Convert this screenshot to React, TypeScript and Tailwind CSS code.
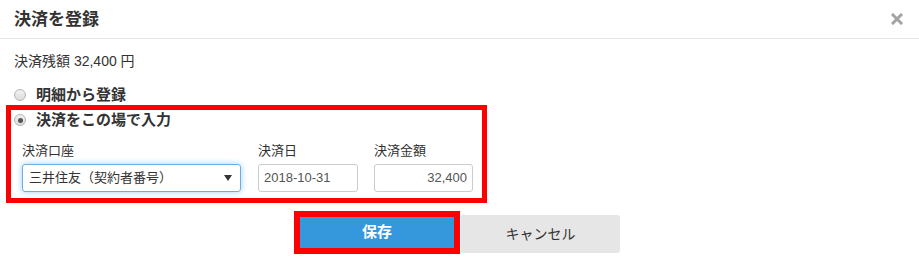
import React, { useState } from 'react';

const font = { fontFamily: '"Liberation Sans", "Noto Sans CJK JP", sans-serif' };

const Radio = ({ checked }: { checked?: boolean }) => (
  <span className="flex h-[12px] w-[12px] items-center justify-center rounded-full border border-[#b4b4b4] bg-gradient-to-b from-[#f2f2f2] to-[#dcdcdc]">
    {checked && <span className="h-[5px] w-[5px] rounded-full bg-[#555]" />}
  </span>
);

const App = () => {
  const [mode] = useState<'detail' | 'direct'>('direct');

  return (
    <div className="h-[267px] w-[919px] bg-white text-[#333]" style={font}>
      {/* Header */}
      <div className="flex h-[39px] items-center justify-between border-b border-[#e5e5e5] pl-[14px] pr-[16px]">
        <h4 className="text-[17px] font-bold leading-none">決済を登録</h4>
        <svg width="12" height="12" viewBox="0 0 12 12" className="text-[#a3a3a3]">
          <path d="M2 2 L10 10 M10 2 L2 10" stroke="currentColor" strokeWidth="3" strokeLinecap="square" />
        </svg>
      </div>

      <div className="px-[6px]">
        <p className="mt-[14px] pl-[8px] text-[14px] leading-[16px]">決済残額 32,400 円</p>

        <label className="mt-[16px] flex h-[20px] items-center gap-[10px] pl-[8px]">
          <Radio checked={mode === 'detail'} />
          <span className="text-[15px] font-bold">明細から登録</span>
        </label>

        {/* Direct entry */}
        <div className="w-[481px] border-[5px] border-[#ff0000] pb-[6px]">
          <label className="flex h-[20px] items-center gap-[10px] pl-[3px]">
            <Radio checked={mode === 'direct'} />
            <span className="text-[15px] font-bold">決済をこの場で入力</span>
          </label>

          <div className="mt-[12px] flex pl-[11px]">
            <div className="w-[219px]">
              <div className="text-[13px] leading-[18px]">決済口座</div>
              <div className="mt-[4px] flex h-[28px] items-center justify-between rounded-[3px] border border-[#66afe9] pl-[6px] pr-[8px] text-[13px] text-[#333] shadow-[0_0_6px_rgba(102,175,233,0.6)]">
                <span>三井住友（契約者番号）</span>
                <svg width="8" height="6" viewBox="0 0 8 6">
                  <path d="M0 0 H8 L4 6 Z" fill="#333" />
                </svg>
              </div>
            </div>
            <div className="ml-[17px] w-[100px]">
              <div className="text-[13px] leading-[18px]">決済日</div>
              <div className="mt-[4px] flex h-[28px] items-center rounded-[3px] border border-[#ccc] px-[5px] text-[13px] text-[#555]">
                2018-10-31
              </div>
            </div>
            <div className="ml-[16px] w-[99px]">
              <div className="text-[13px] leading-[18px]">決済金額</div>
              <div className="mt-[4px] flex h-[28px] items-center justify-end rounded-[3px] border border-[#ccc] px-[5px] text-[13px] text-[#555]">
                32,400
              </div>
            </div>
          </div>
        </div>

        {/* Buttons */}
        <div className="mt-[8px] flex justify-center pr-[5px]">
          <div className="h-[43px] w-[166px] border-[6px] border-[#ff0000]">
            <button className="flex h-full w-full items-center justify-center bg-[#3598dc] text-[15px] font-bold text-white">
              保存
            </button>
          </div>
          <button className="ml-[1px] mt-[4px] flex h-[38px] w-[159px] items-center justify-center rounded-r-[3px] bg-[#e6e6e6] text-[14px] text-[#333]">
            キャンセル
          </button>
        </div>
      </div>
    </div>
  );
};

export default App;
